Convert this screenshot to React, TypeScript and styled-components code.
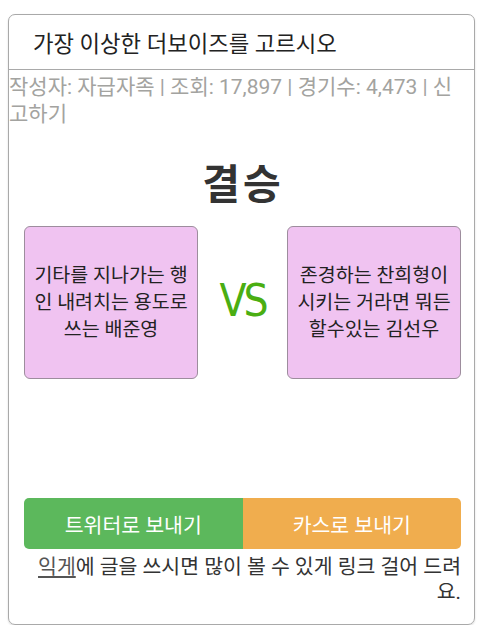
import React from 'react';
import styled, { createGlobalStyle } from 'styled-components';

const GlobalStyle = createGlobalStyle`
  body {
    margin: 0;
    background: #fff;
    font-family: Roboto, "Noto Sans CJK KR", sans-serif;
    color: #333;
    word-break: break-all;
  }
`;

const match = {
  title: '가장 이상한 더보이즈를 고르시오',
  author: '자급자족',
  views: '17,897',
  games: '4,473',
  left: '기타를 지나가는 행인 내려치는 용도로 쓰는 배준영',
  right: '존경하는 찬희형이 시키는 거라면 뭐든 할수있는 김선우',
};

const App = () => {
  const meta = `작성자: ${match.author} | 조회: ${match.views} | 경기수: ${match.games} | 신고하기`;

  return (
    <>
      <GlobalStyle />
      <Panel>
        <PanelHeader>
          <Title>{match.title}</Title>
        </PanelHeader>
        <Meta>{meta}</Meta>
        <RoundTitle>결승</RoundTitle>

        <Versus>
          <Candidate>{match.left}</Candidate>
          <VsMark>VS</VsMark>
          <Candidate>{match.right}</Candidate>
        </Versus>

        <ShareRow>
          <ShareButton $kind="twitter">트위터로 보내기</ShareButton>
          <ShareButton $kind="kakao">카스로 보내기</ShareButton>
        </ShareRow>

        <Notice>
          <NoticeLink href="#">익게</NoticeLink>에 글을 쓰시면 많이 볼 수 있게 링크 걸어 드려요.
        </Notice>
      </Panel>
    </>
  );
};

const Panel = styled.div`
  margin: 14px 5px 0 8px;
  height: 611px;
  box-sizing: border-box;
  border: 1px solid #a9a9a9;
  border-radius: 7px;
  box-shadow: 0 1px 2px rgba(0, 0, 0, 0.15);
  display: flex;
  flex-direction: column;
`;

const PanelHeader = styled.div`
  height: 54px;
  display: flex;
  align-items: center;
  padding: 0 24px;
  border-bottom: 1px solid #a9a9a9;
`;

const Title = styled.h3`
  margin: 0;
  font-size: 22.3px;
  font-weight: 400;
  color: #222;
`;

const Meta = styled.div`
  padding: 4px 10px 0 0;
  font-size: 21px;
  line-height: 27px;
  color: #a3a3a0;
`;

const RoundTitle = styled.h1`
  margin: 32px 0 0;
  padding-left: 3px;
  text-align: center;
  font-size: 41px;
  line-height: 50px;
  letter-spacing: 3px;
  font-weight: 700;
  color: #333;
`;

const Versus = styled.div`
  margin: 16px 13px 0 15px;
  display: flex;
  align-items: stretch;
  justify-content: space-between;
`;

const Candidate = styled.div`
  width: 174px;
  height: 153px;
  box-sizing: border-box;
  padding: 0 4px;
  display: flex;
  align-items: center;
  justify-content: center;
  text-align: center;
  background: #f0c3f1;
  border: 1px solid #9d8d9d;
  border-radius: 6px;
  font-size: 19.5px;
  line-height: 27px;
  color: #222;
`;

const VsMark = styled.div`
  align-self: center;
  margin-top: -4px;
  font-family: "DejaVu Sans Condensed", "DejaVu Sans", sans-serif;
  font-size: 44px;
  letter-spacing: -3px;
  color: #4aae12;
`;

const ShareRow = styled.div`
  margin: 119px 13px 0 15px;
  display: flex;
  border-radius: 5px;
  overflow: hidden;
`;

const ShareButton = styled.button<{ $kind: 'twitter' | 'kakao' }>`
  flex: 1;
  height: 51px;
  border: none;
  font-family: inherit;
  font-size: 20.5px;
  color: #fff;
  background-color: ${props => (props.$kind === 'twitter' ? '#5cb85c' : '#f0ad4e')};
  cursor: pointer;
`;

const Notice = styled.p`
  margin: 6px 13px 0 15px;
  text-align: right;
  font-size: 20.5px;
  line-height: 25px;
  color: #333;
`;

const NoticeLink = styled.a`
  color: #555;
  text-decoration: underline;
`;

export default App;
